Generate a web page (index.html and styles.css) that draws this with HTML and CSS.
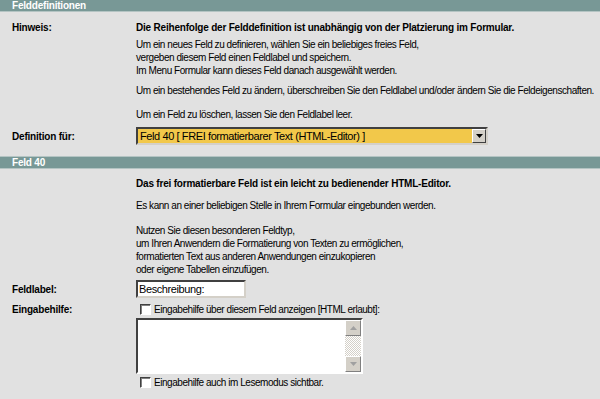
FILE: index.html
```html
<!DOCTYPE html>
<html lang="de">
<head>
    <meta charset="UTF-8">
    <title>Felddefinitionen</title>
    <link rel="stylesheet" href="styles.css">
</head>
<body>
    <div class="section-head">Felddefinitionen</div>

    <div class="row row-hint">
        <div class="label">Hinweis:</div>
        <div class="value">
            <p class="lead">Die Reihenfolge der Felddefinition ist unabhängig von der Platzierung im Formular.</p>
            <p class="p1">Um ein neues Feld zu definieren, wählen Sie ein beliebiges freies Feld,<br>vergeben diesem Feld einen Feldlabel und speichern.<br>Im Menu Formular kann dieses Feld danach ausgewählt werden.</p>
            <p class="p2">Um ein bestehendes Feld zu ändern, überschreiben Sie den Feldlabel und/oder ändern Sie die Feldeigenschaften.</p>
            <p class="p3">Um ein Feld zu löschen, lassen Sie den Feldlabel leer.</p>
        </div>
    </div>

    <div class="row row-def">
        <div class="label">Definition für:</div>
        <div class="value">
            <div class="select">
                <span class="select-text">Feld 40 [ FREI formatierbarer Text (HTML-Editor) ]</span>
                <span class="select-btn">
                    <svg width="7" height="4" viewBox="0 0 7 4"><polygon points="0,0 7,0 3.5,4" fill="#000"/></svg>
                </span>
            </div>
        </div>
    </div>

    <div class="section-head head-2">Feld 40</div>

    <div class="row row-info">
        <div class="label"></div>
        <div class="value">
            <p class="lead">Das frei formatierbare Feld ist ein leicht zu bedienender HTML-Editor.</p>
            <p class="p4">Es kann an einer beliebigen Stelle in Ihrem Formular eingebunden werden.</p>
            <p class="p5">Nutzen Sie diesen besonderen Feldtyp,<br>um Ihren Anwendern die Formatierung von Texten zu ermöglichen,<br>formatierten Text aus anderen Anwendungen einzukopieren<br>oder eigene Tabellen einzufügen.</p>
        </div>
    </div>

    <div class="row row-label">
        <div class="label">Feldlabel:</div>
        <div class="value">
            <div class="textbox">Beschreibung:</div>
        </div>
    </div>

    <div class="row row-help">
        <div class="label">Eingabehilfe:</div>
        <div class="value">
            <div class="check"><span class="box"></span>Eingabehilfe über diesem Feld anzeigen [HTML erlaubt]:</div>
            <div class="memo">
                <div class="memo-area"></div>
                <div class="scrollbar">
                    <span class="sb-btn"><svg width="7" height="4" viewBox="0 0 7 4"><polygon points="0,4 7,4 3.5,0" fill="#a0a0a0"/></svg></span>
                    <span class="sb-track"></span>
                    <span class="sb-btn"><svg width="7" height="4" viewBox="0 0 7 4"><polygon points="0,0 7,0 3.5,4" fill="#a0a0a0"/></svg></span>
                </div>
            </div>
            <div class="check check-2"><span class="box"></span>Eingabehilfe auch im Lesemodus sichtbar.</div>
        </div>
    </div>
</body>
</html>
```

FILE: styles.css
```css
body {
    margin: 0;
    background-color: #e1e1e1;
    font-family: 'Liberation Sans', Arial, sans-serif;
    font-size: 10px;
    letter-spacing: -0.45px;
    line-height: 13px;
    color: #000;
}

p {
    margin: 0;
}

.section-head {
    height: 11px;
    line-height: 12px;
    padding-left: 12px;
    background-color: #789896;
    border-bottom: 1px solid #b4c4c3;
    color: #fff;
    font-weight: bold;
    letter-spacing: -0.2px;
}

.head-2 {
    margin-top: 11px;
    border-top: 1px solid #b4c4c3;
}

.row {
    display: grid;
    grid-template-columns: 124px 1fr;
    padding-left: 12px;
}

.label,
.lead {
    font-weight: bold;
    letter-spacing: -0.2px;
}

.row-hint { margin-top: 9px; }
.p1 { margin-top: 4px; }
.p2 { margin-top: 7px; }
.p3 { margin-top: 11px; }

.row-def {
    margin-top: 6px;
    align-items: center;
}

.select {
    display: flex;
    width: 352px;
    height: 18px;
    box-sizing: border-box;
    border: 2px solid;
    border-color: #404040 #d4d0c8 #d4d0c8 #404040;
    background-color: #f2c84a;
    font-size: 11px;
    letter-spacing: -0.4px;
    line-height: 14px;
}

.select-text {
    flex: 1;
    padding-left: 2px;
}

.select-btn {
    display: flex;
    align-items: center;
    justify-content: center;
    width: 14px;
    background-color: #d4d0c8;
    border: 1px solid;
    border-color: #fff #404040 #404040 #fff;
    box-sizing: border-box;
}

.row-info { margin-top: 8px; }
.p4 { margin-top: 9px; }
.p5 { margin-top: 12px; }

.row-label {
    margin-top: 4px;
    align-items: center;
}

.textbox {
    width: 110px;
    height: 18px;
    box-sizing: border-box;
    border: 2px solid;
    border-color: #404040 #d4d0c8 #d4d0c8 #404040;
    background-color: #fff;
    font-size: 11px;
    letter-spacing: -0.4px;
    line-height: 14px;
    padding-left: 1px;
}

.row-help { margin-top: 5px; }

.check {
    display: flex;
    align-items: center;
    height: 13px;
    padding-left: 4px;
    gap: 3px;
}

.box {
    width: 11px;
    height: 11px;
    box-sizing: border-box;
    border: 1px solid;
    border-color: #404040 #fff #fff #404040;
    background-color: #fff;
    box-shadow: inset 1px 1px 0 #808080;
}

.memo {
    display: flex;
    width: 227px;
    height: 56px;
    margin-top: 2px;
    box-sizing: border-box;
    border: 2px solid;
    border-color: #404040 #fff #fff #404040;
    background-color: #fff;
}

.memo-area {
    flex: 1;
}

.scrollbar {
    display: flex;
    flex-direction: column;
    width: 16px;
}

.sb-btn {
    display: flex;
    align-items: center;
    justify-content: center;
    height: 16px;
    box-sizing: border-box;
    background-color: #d4d0c8;
    border: 1px solid;
    border-color: #fff #808080 #808080 #fff;
}

.sb-track {
    flex: 1;
    background-color: #ece9e4;
    background-image: repeating-conic-gradient(#d4d0c8 0 25%, #fff 0 50%);
    background-size: 2px 2px;
}

.check-2 {
    margin-top: 2px;
}
```
